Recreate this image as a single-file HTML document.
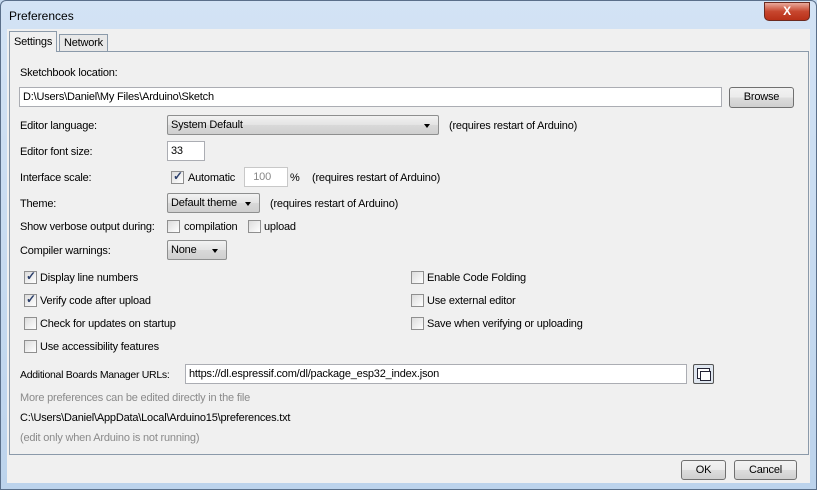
<!DOCTYPE html>
<html><head><style>
*{box-sizing:border-box}
body{margin:0;width:817px;height:490px;overflow:hidden;font-family:"Liberation Sans",sans-serif;font-size:11px;letter-spacing:-0.2px;color:#000;background:#c5d9ef}
.win{position:absolute;left:0;top:0;width:817px;height:490px;background:linear-gradient(#d3e3f5,#bcd3ec);border:1px solid #5a6f8a;border-radius:6px 6px 0 0}
.title{position:absolute;left:8px;top:8px;font-size:12px;letter-spacing:0}
.close{position:absolute;left:763px;top:1px;width:46px;height:19px;background:linear-gradient(#e9a99b,#c7462e 50%,#b83018);border:1px solid #6b2a20;border-radius:0 0 5px 5px;color:#fff;font-weight:bold;text-align:center;font-size:12px;line-height:17px}
.a{position:absolute;white-space:nowrap}
.panel{position:absolute;border:1px solid #8b9aaa;background:#f0f0f0}
.tab{position:absolute;border:1px solid #8b9aaa;border-bottom:none;background:#f0f0f0;padding:2px 4px}
.field{position:absolute;background:#fff;border:1px solid #abadb3;height:20px;padding:3px 3px}
.btn{position:absolute;border:1px solid #707070;border-radius:3px;background:linear-gradient(#f2f2f2,#ebebeb 50%,#dddddd 51%,#cfcfcf);text-align:center;line-height:18px}
.combo{position:absolute;border:1px solid #8e8f8f;border-radius:2px;background:linear-gradient(#f2f2f2,#e3e3e3 50%,#d9d9d9 51%,#cfcfcf);height:20px;padding:3px 3px}
.combo:after{content:"";position:absolute;right:8px;top:8px;border:3.5px solid transparent;border-top:4px solid #000}
.cb{position:absolute;width:13px;height:13px;border:1px solid #8f8f8f;background:linear-gradient(135deg,#dcdcdc,#fff)}
.cb.on:after{content:"✓";position:absolute;left:1px;top:-3px;font-size:12px;color:#2b3f6b;font-weight:bold}
.g{color:#8a8a8a}
</style></head><body>
<div class="win">
<div class="title">Preferences</div>
<div class="close">X</div>
</div>
<div class="a" style="left:7px;top:29px;width:803px;height:454px;background:#f0f0f0;position:absolute"></div>
<div class="panel" style="left:9px;top:51px;width:800px;height:404px"></div>
<div class="tab" style="left:59px;top:34px;height:17px;background:#e8e8e8">Network</div>
<div class="tab" style="left:9px;top:31px;height:21px;padding-top:4px;background:#f0f0f0;z-index:2">Settings</div>

<div class="a" style="left:20px;top:67px">Sketchbook location:</div>
<div class="field" style="left:19px;top:87px;width:703px">D:\Users\Daniel\My Files\Arduino\Sketch</div>
<div class="btn" style="left:729px;top:87px;width:65px;height:21px">Browse</div>

<div class="a" style="left:20px;top:120px">Editor language:</div>
<div class="combo" style="left:167px;top:115px;width:272px">System Default</div>
<div class="a" style="left:449px;top:120px">(requires restart of Arduino)</div>

<div class="a" style="left:20px;top:146px">Editor font size:</div>
<div class="field" style="left:167px;top:141px;width:38px">33</div>

<div class="a" style="left:20px;top:172px">Interface scale:</div>
<div class="cb on" style="left:171px;top:171px"></div>
<div class="a" style="left:188px;top:172px">Automatic</div>
<div class="field" style="left:244px;top:167px;width:44px;color:#888;text-align:right;padding-right:16px;border-color:#c8c8c8">100</div>
<div class="a" style="left:290px;top:172px">%</div>
<div class="a" style="left:312px;top:172px">(requires restart of Arduino)</div>

<div class="a" style="left:20px;top:198px">Theme:</div>
<div class="combo" style="left:167px;top:193px;width:93px">Default theme</div>
<div class="a" style="left:270px;top:198px">(requires restart of Arduino)</div>

<div class="a" style="left:20px;top:221px">Show verbose output during:</div>
<div class="cb" style="left:167px;top:220px"></div>
<div class="a" style="left:184px;top:221px">compilation</div>
<div class="cb" style="left:248px;top:220px"></div>
<div class="a" style="left:264px;top:221px">upload</div>

<div class="a" style="left:20px;top:245px">Compiler warnings:</div>
<div class="combo" style="left:167px;top:240px;width:60px">None</div>

<div class="cb on" style="left:24px;top:271px"></div><div class="a" style="left:40px;top:272px">Display line numbers</div>
<div class="cb on" style="left:24px;top:294px"></div><div class="a" style="left:40px;top:295px">Verify code after upload</div>
<div class="cb" style="left:24px;top:317px"></div><div class="a" style="left:40px;top:318px">Check for updates on startup</div>
<div class="cb" style="left:24px;top:340px"></div><div class="a" style="left:40px;top:341px">Use accessibility features</div>
<div class="cb" style="left:411px;top:271px"></div><div class="a" style="left:427px;top:272px">Enable Code Folding</div>
<div class="cb" style="left:411px;top:294px"></div><div class="a" style="left:427px;top:295px">Use external editor</div>
<div class="cb" style="left:411px;top:317px"></div><div class="a" style="left:427px;top:318px">Save when verifying or uploading</div>

<div class="a" style="left:20px;top:369px;font-size:10.5px;letter-spacing:-0.3px">Additional Boards Manager URLs:</div>
<div class="field" style="left:185px;top:364px;width:502px">https://dl.espressif.com/dl/package_esp32_index.json</div>
<div class="a" style="left:693px;top:364px;width:21px;height:20px;border:1px solid #555;border-radius:2px;background:#dfe6ef">
<div style="position:absolute;left:3px;top:3px;width:13px;height:11px;border:1px solid #223;background:#fff"></div>
<div style="position:absolute;left:6px;top:6px;width:11px;height:10px;border:1px solid #223;background:#fff"></div></div>

<div class="a g" style="left:20px;top:392px">More preferences can be edited directly in the file</div>
<div class="a" style="left:20px;top:412px">C:\Users\Daniel\AppData\Local\Arduino15\preferences.txt</div>
<div class="a g" style="left:20px;top:432px">(edit only when Arduino is not running)</div>

<div class="btn" style="left:681px;top:460px;width:45px;height:20px">OK</div>
<div class="btn" style="left:734px;top:460px;width:63px;height:20px">Cancel</div>
</body></html>
